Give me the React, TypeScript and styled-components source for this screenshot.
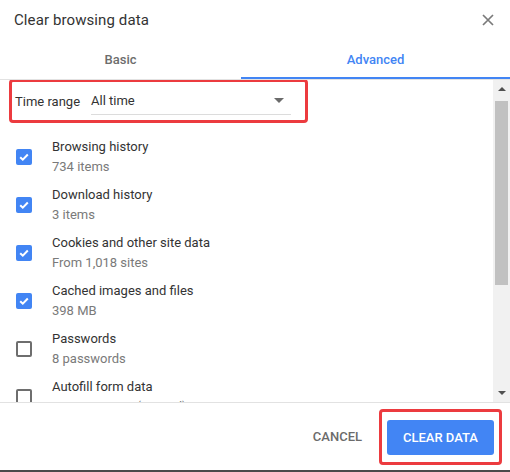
import React from 'react';
import styled, { createGlobalStyle } from 'styled-components';

const GlobalStyle = createGlobalStyle`
  html, body {
    margin: 0;
    padding: 0;
    background: #fff;
  }
  body {
    font-family: Roboto, 'Liberation Sans', sans-serif;
  }
`;

const items = [
  { title: 'Browsing history', sub: '734 items', checked: true },
  { title: 'Download history', sub: '3 items', checked: true },
  { title: 'Cookies and other site data', sub: 'From 1,018 sites', checked: true },
  { title: 'Cached images and files', sub: '398 MB', checked: true },
  { title: 'Passwords', sub: '8 passwords', checked: false },
  { title: 'Autofill form data', sub: '2 suggestions (synced)', checked: false },
];

const App = () => {
  return (
    <>
      <GlobalStyle />
      <Dialog>
        <Header>
          <Title>Clear browsing data</Title>
          <Close aria-label="Close">
            <svg width="12" height="12" viewBox="0 0 12 12">
              <path d="M1 1L11 11M11 1L1 11" stroke="#7a7a7a" strokeWidth="1.7" fill="none" />
            </svg>
          </Close>
        </Header>
        <TabBar>
          <Tab>Basic</Tab>
          <Tab $active>Advanced</Tab>
        </TabBar>
        <Body>
          <Content>
            <RangeBox>
              <RangeLabel>Time range</RangeLabel>
              <Select>
                <span>All time</span>
                <Caret />
              </Select>
            </RangeBox>
            <List>
              {items.map((it) => (
                <Row key={it.title}>
                  <Check $checked={it.checked}>
                    {it.checked && (
                      <svg width="12" height="12" viewBox="0 0 12 12">
                        <path d="M2.2 6.2L4.8 8.7L9.8 3.5" stroke="#fff" strokeWidth="2" fill="none" />
                      </svg>
                    )}
                  </Check>
                  <Texts>
                    <ItemTitle>{it.title}</ItemTitle>
                    <ItemSub>{it.sub}</ItemSub>
                  </Texts>
                </Row>
              ))}
            </List>
          </Content>
          <Scrollbar>
            <ArrowUp />
            <Thumb />
            <Spacer />
            <ArrowDown />
          </Scrollbar>
        </Body>
        <Footer>
          <CancelButton>Cancel</CancelButton>
          <Highlight>
            <PrimaryButton>Clear data</PrimaryButton>
          </Highlight>
        </Footer>
      </Dialog>
    </>
  );
};

export default App;

const Dialog = styled.div`
  width: 510px;
  height: 472px;
  display: flex;
  flex-direction: column;
  background: #fff;
  border-bottom: 2px solid #4a4a4a;
  box-sizing: border-box;
  overflow: hidden;
`;

const Header = styled.div`
  height: 40px;
  display: flex;
  align-items: center;
  justify-content: space-between;
  padding: 0 16px 0 14px;
  flex-shrink: 0;
`;

const Title = styled.div`
  font-size: 15px;
  color: #333;
  letter-spacing: 0.1px;
`;

const Close = styled.div`
  width: 12px;
  height: 12px;
  display: flex;
  align-items: center;
  justify-content: center;
`;

const TabBar = styled.div`
  height: 40px;
  display: flex;
  border-bottom: 1px solid #e2e2e2;
  box-sizing: border-box;
  flex-shrink: 0;
`;

const Tab = styled.div<{ $active?: boolean }>`
  flex: ${(p) => (p.$active ? '269px' : '241px')} 0 0;
  display: flex;
  align-items: center;
  justify-content: center;
  padding-bottom: 1px;
  font-size: 13px;
  font-weight: 500;
  color: ${(p) => (p.$active ? '#4285f4' : '#6d6d6d')};
  box-shadow: ${(p) => (p.$active ? 'inset 0 -2px 0 #4285f4' : 'none')};
`;

const Body = styled.div`
  height: 322px;
  display: flex;
  flex-shrink: 0;
`;

const Content = styled.div`
  flex: 1;
  overflow: hidden;
`;

const RangeBox = styled.div`
  width: 299px;
  height: 44px;
  margin: -1px 0 0 9px;
  border: 3px solid #ec3b3f;
  border-radius: 4px;
  box-sizing: border-box;
  display: flex;
  align-items: center;
  padding-left: 3px;
  position: relative;
`;

const RangeLabel = styled.div`
  font-size: 13px;
  color: #333;
  width: 76px;
`;

const Select = styled.div`
  width: 200px;
  height: 26px;
  margin-top: 1px;
  display: flex;
  align-items: center;
  justify-content: space-between;
  border-bottom: 1px solid #dcdcdc;
  box-sizing: border-box;
  font-size: 13px;
  color: #333;
  padding-right: 7px;
  padding-bottom: 2px;
`;

const Caret = styled.span`
  width: 0;
  height: 0;
  border-left: 5px solid transparent;
  border-right: 5px solid transparent;
  border-top: 5px solid #6b6b6b;
`;

const List = styled.div`
  padding-top: 14px;
`;

const Row = styled.div`
  height: 48px;
  display: flex;
  align-items: flex-start;
  padding-left: 16px;
  box-sizing: border-box;
`;

const Check = styled.div<{ $checked: boolean }>`
  width: 16px;
  height: 16px;
  margin-top: 12px;
  border-radius: 2px;
  box-sizing: border-box;
  background: ${(p) => (p.$checked ? '#4285f4' : '#fff')};
  border: ${(p) => (p.$checked ? 'none' : '2px solid #6e6e6e')};
  display: flex;
  align-items: center;
  justify-content: center;
`;

const Texts = styled.div`
  margin-left: 20px;
  display: flex;
  flex-direction: column;
`;

const ItemTitle = styled.div`
  font-size: 13px;
  line-height: 20px;
  color: #333;
`;

const ItemSub = styled.div`
  font-size: 13px;
  line-height: 20px;
  color: #7a7a7a;
`;

const Scrollbar = styled.div`
  width: 17px;
  background: #f1f1f1;
  display: flex;
  flex-direction: column;
  align-items: center;
  flex-shrink: 0;
`;

const ArrowUp = styled.div`
  width: 0;
  height: 0;
  margin-top: 7px;
  border-left: 4px solid transparent;
  border-right: 4px solid transparent;
  border-bottom: 4px solid #505050;
`;

const ArrowDown = styled.div`
  width: 0;
  height: 0;
  margin-bottom: 7px;
  border-left: 4px solid transparent;
  border-right: 4px solid transparent;
  border-top: 4px solid #505050;
`;

const Thumb = styled.div`
  width: 13px;
  height: 184px;
  margin-top: 10px;
  background: #c1c1c1;
`;

const Spacer = styled.div`
  flex: 1;
`;

const Footer = styled.div`
  flex: 1;
  display: flex;
  align-items: center;
  justify-content: flex-end;
  padding-right: 8px;
  border-top: 1px solid #e2e2e2;
`;

const CancelButton = styled.div`
  font-size: 13px;
  font-weight: 500;
  color: #6b6b6b;
  text-transform: uppercase;
  margin-right: 17px;
`;

const Highlight = styled.div`
  border: 3px solid #ec3b3f;
  border-radius: 4px;
  padding: 8px 5px 7px;
`;

const PrimaryButton = styled.div`
  width: 107px;
  height: 35px;
  display: flex;
  align-items: center;
  justify-content: center;
  background: #4285f4;
  border-radius: 3px;
  color: #fff;
  font-size: 13px;
  font-weight: 500;
  text-transform: uppercase;
`;
